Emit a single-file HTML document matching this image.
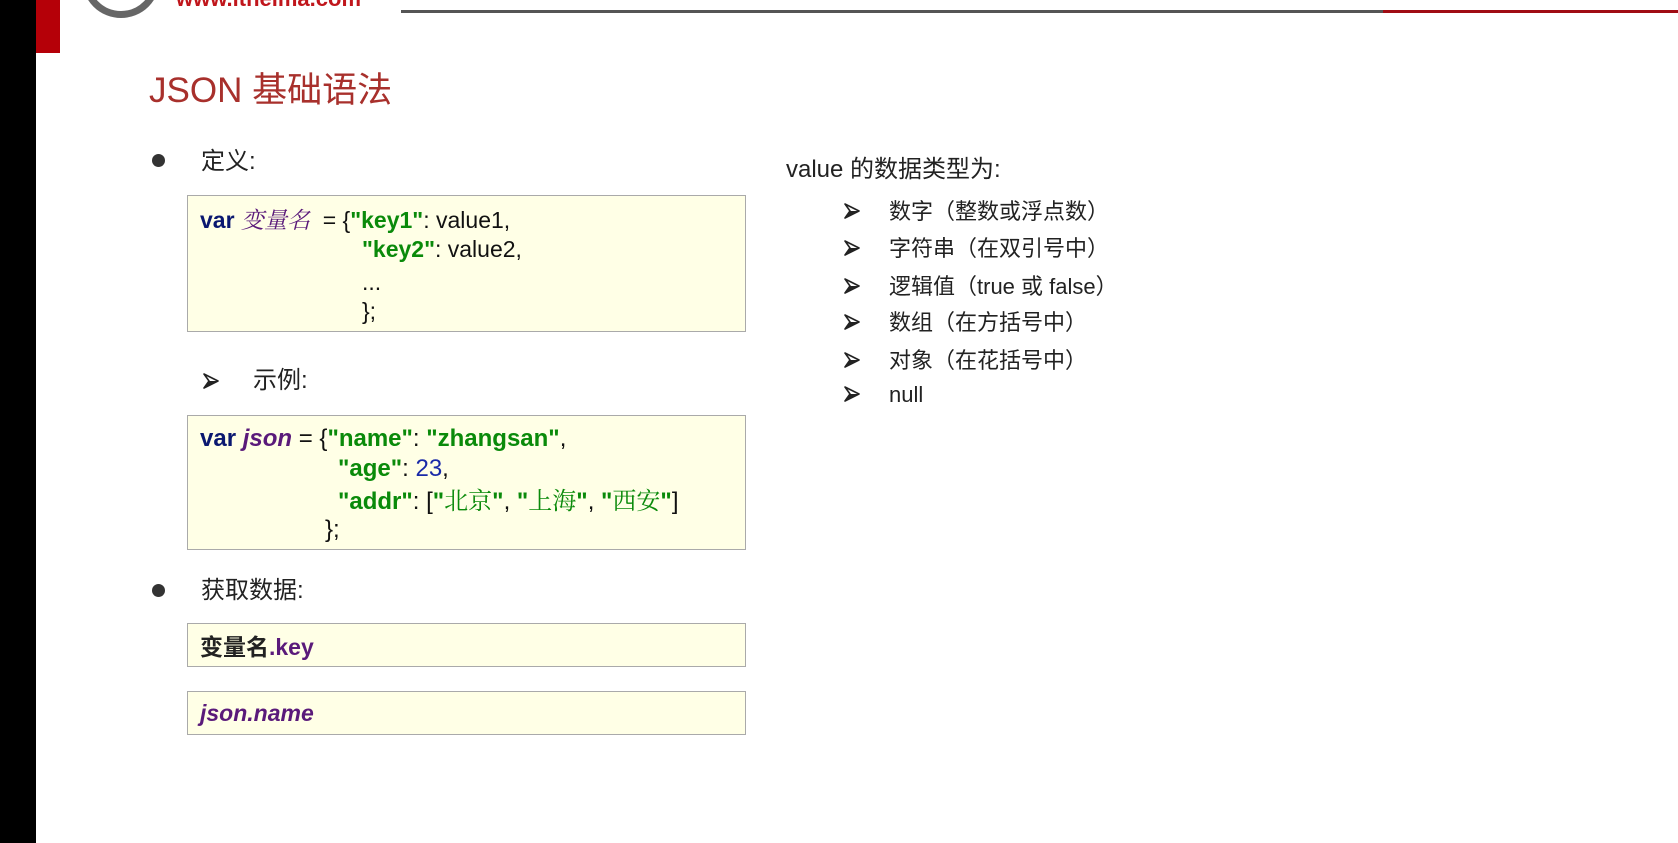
<!DOCTYPE html>
<html><head><meta charset="utf-8"><style>
html,body{margin:0;padding:0;}
body{width:1678px;height:843px;position:relative;background:#fff;overflow:hidden;font-family:"Liberation Sans","Noto Sans CJK SC",sans-serif;color:#222;}
.a{position:absolute;white-space:nowrap;line-height:1;}
.box{position:absolute;left:187px;width:559px;background:#ffffe6;border:1px solid #aaa;box-sizing:border-box;}
.code{font-family:"Liberation Sans Narrow","Liberation Sans","Noto Sans CJK SC",sans-serif;font-size:23px;color:#111;}
.code .a{line-height:23px;height:23px;}
.kw{color:#0a1870;font-weight:bold;}
.g{color:#0a8a0a;font-weight:bold;}
.p{color:#5a1a7a;font-style:italic;}
.pb{color:#5a1a7a;font-weight:bold;}
.n{color:#1a2aa8;}
.cn{font-family:"Noto Serif CJK SC",serif;font-weight:normal;color:#0a8a0a;}
.dot{position:absolute;width:13px;height:13px;border-radius:50%;background:#333;}
.arr{position:absolute;width:16px;height:16px;}
.t{font-size:24px;color:#222;}
.it{font-size:22px;color:#222;left:889px;}
</style></head><body>
<div class="a" style="left:0;top:0;width:36px;height:843px;background:#000;"></div>
<div class="a" style="left:36px;top:0;width:24px;height:53px;background:#b50008;"></div>
<div class="a" style="left:82px;top:-60px;width:64px;height:64px;border:7px solid #666;border-radius:50%;"></div>
<div class="a" style="left:176px;top:-12px;font-size:22px;font-weight:bold;color:#c0161c;">www.itheima.com</div>
<div class="a" style="left:401px;top:10px;width:982px;height:3px;background:#555;"></div>
<div class="a" style="left:1383px;top:10px;width:295px;height:3px;background:#a00c14;"></div>

<div class="a" style="left:149px;top:73px;font-size:35px;color:#a8302c;">JSON 基础语法</div>

<div class="dot" style="left:152px;top:154px;"></div>
<div class="a t" style="left:201px;top:150px;">定义:</div>

<div class="box code" style="top:195px;height:137px;">
<div class="a" style="left:12px;top:11px;"><span class="kw">var</span> <span class="p" style="font-family:'Noto Serif CJK SC',serif;">变量名</span> &nbsp;= {<span class="g">"key1"</span>: value1,</div>
<div class="a" style="left:174px;top:42px;"><span class="g">"key2"</span>: value2,</div>
<div class="a" style="left:174px;top:75px;">...</div>
<div class="a" style="left:174px;top:104px;">};</div>
</div>

<svg class="arr" style="left:203px;top:373px;" viewBox="0 0 16 16"><path d="M1 1 L15 8 L1 15 L6 8 Z" fill="#fff" stroke="#222" stroke-width="1.6" stroke-linejoin="round"/><path d="M6 8 L15 8 L1 15 Z" fill="#222"/></svg>
<div class="a t" style="left:253px;top:369px;">示例:</div>

<div class="box code" style="top:415px;height:135px;font-size:24px;">
<div class="a" style="left:12px;top:11px;"><span class="kw">var</span> <span class="p" style="font-weight:bold;">json</span> = {<span class="g">"name"</span>: <span class="g">"zhangsan"</span>,</div>
<div class="a" style="left:150px;top:41px;"><span class="g">"age"</span>: <span class="n">23</span>,</div>
<div class="a" style="left:150px;top:71px;"><span class="g">"addr"</span>: [<span class="g">"</span><span class="cn">北京</span><span class="g">"</span>, <span class="g">"</span><span class="cn">上海</span><span class="g">"</span>, <span class="g">"</span><span class="cn">西安</span><span class="g">"</span>]</div>
<div class="a" style="left:137px;top:102px;">};</div>
</div>

<div class="dot" style="left:152px;top:584px;"></div>
<div class="a t" style="left:201px;top:579px;">获取数据:</div>

<div class="box code" style="top:623px;height:44px;">
<div class="a" style="left:12px;top:10px;"><span style="font-weight:bold;color:#222;font-family:'Noto Sans CJK SC',sans-serif;">变量名</span><span class="pb">.key</span></div>
</div>
<div class="box code" style="top:691px;height:44px;">
<div class="a" style="left:12px;top:10px;"><span class="pb" style="font-style:italic;">json.name</span></div>
</div>

<div class="a t" style="left:786px;top:158px;">value 的数据类型为:</div>
<svg class="arr" style="left:844px;top:203px;" viewBox="0 0 16 16"><path d="M1 1 L15 8 L1 15 L6 8 Z" fill="#fff" stroke="#222" stroke-width="1.6" stroke-linejoin="round"/><path d="M6 8 L15 8 L1 15 Z" fill="#222"/></svg>
<div class="a it" style="top:201px;">数字（整数或浮点数）</div>
<svg class="arr" style="left:844px;top:240px;" viewBox="0 0 16 16"><path d="M1 1 L15 8 L1 15 L6 8 Z" fill="#fff" stroke="#222" stroke-width="1.6" stroke-linejoin="round"/><path d="M6 8 L15 8 L1 15 Z" fill="#222"/></svg>
<div class="a it" style="top:238px;">字符串（在双引号中）</div>
<svg class="arr" style="left:844px;top:278px;" viewBox="0 0 16 16"><path d="M1 1 L15 8 L1 15 L6 8 Z" fill="#fff" stroke="#222" stroke-width="1.6" stroke-linejoin="round"/><path d="M6 8 L15 8 L1 15 Z" fill="#222"/></svg>
<div class="a it" style="top:276px;">逻辑值（true 或 false）</div>
<svg class="arr" style="left:844px;top:314px;" viewBox="0 0 16 16"><path d="M1 1 L15 8 L1 15 L6 8 Z" fill="#fff" stroke="#222" stroke-width="1.6" stroke-linejoin="round"/><path d="M6 8 L15 8 L1 15 Z" fill="#222"/></svg>
<div class="a it" style="top:312px;">数组（在方括号中）</div>
<svg class="arr" style="left:844px;top:352px;" viewBox="0 0 16 16"><path d="M1 1 L15 8 L1 15 L6 8 Z" fill="#fff" stroke="#222" stroke-width="1.6" stroke-linejoin="round"/><path d="M6 8 L15 8 L1 15 Z" fill="#222"/></svg>
<div class="a it" style="top:350px;">对象（在花括号中）</div>
<svg class="arr" style="left:844px;top:386px;" viewBox="0 0 16 16"><path d="M1 1 L15 8 L1 15 L6 8 Z" fill="#fff" stroke="#222" stroke-width="1.6" stroke-linejoin="round"/><path d="M6 8 L15 8 L1 15 Z" fill="#222"/></svg>
<div class="a it" style="top:384px;">null</div>
</body></html>
